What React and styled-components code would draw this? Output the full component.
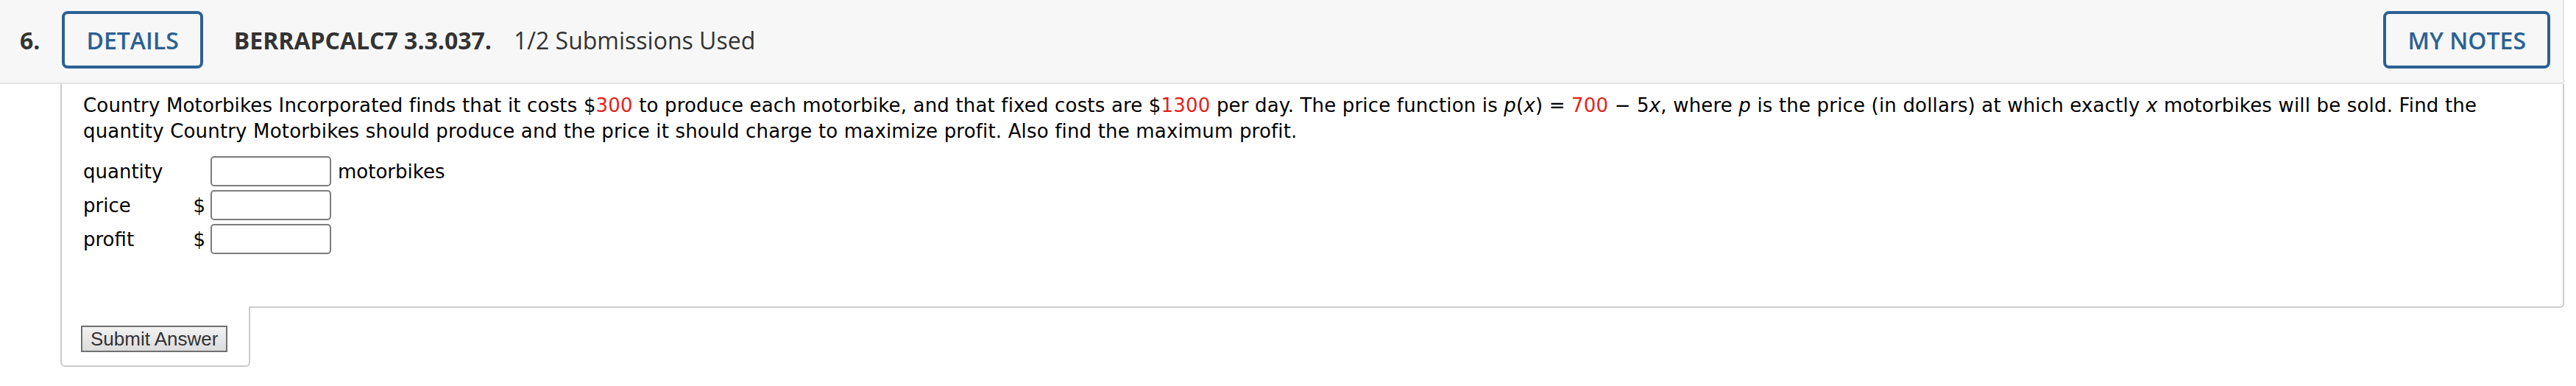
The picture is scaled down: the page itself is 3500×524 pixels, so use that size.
import React from "react";
import styled, { createGlobalStyle } from "styled-components";

const GlobalStyle = createGlobalStyle`
  body {
    margin: 0;
    background: #ffffff;
  }
`;

// question header > number, details, title, notes
const Header = styled.div`
  display: flex;
  align-items: center;
  box-sizing: border-box;
  height: 114px;
  padding: 0 17px 4px 27px;
  background: #f7f7f7;
  border-right: 2px solid #e4e4e4;
  border-bottom: 2px solid #e4e4e4;
  border-bottom-right-radius: 4px;
  font-family: "Open Sans", sans-serif;
  font-size: 32px;
  color: #333333;
`;
const Number = styled.span`
  font-weight: 700;
`;
const OutlineButton = styled.button`
  height: 78px;
  margin-left: ${({ right }) => (right ? "auto" : "30px")};
  padding: 0 29px;
  background: transparent;
  border: 4px solid #2b6194;
  border-radius: 8px;
  color: #2b6194;
  font-family: "Open Sans", sans-serif;
  font-size: 32px;
  font-weight: 600;
`;
const Title = styled.span`
  margin-left: 42px;
  font-weight: 700;
`;
const Used = styled.span`
  margin-left: 30px;
`;

const Page = styled.div`
  width: 3484px;
`;
const Card = styled.div`
  margin-left: 82px;
  padding: 12px 29px 71px 29px;
  border: 2px solid #cccccc;
  border-top: none;
  border-bottom-right-radius: 6px;
  font-family: "DejaVu Sans", Verdana, sans-serif;
  font-size: 26px;
  color: #000000;
`;
const Question = styled.p`
  margin: 0;
  line-height: 35px;
  letter-spacing: 0.17px;
`;
const Red = styled.span`
  color: #e2231a;
`;
const AnswerGrid = styled.div`
  display: grid;
  grid-template-columns: 145px 28px 164px auto;
  row-gap: 5px;
  align-items: center;
  margin-top: 16px;
`;
const Label = styled.span``;
const Dollar = styled.span`
  text-align: right;
  padding-right: 7px;
`;
const Field = styled.input`
  box-sizing: border-box;
  width: 164px;
  height: 41px;
  border: 2px solid #7c7c7c;
  border-radius: 5px;
  background: #ffffff;
`;
const Unit = styled.span`
  margin-left: 9px;
`;
const SubmitTab = styled.div`
  box-sizing: border-box;
  width: 258px;
  margin: -2px 0 0 82px;
  padding: 26px 0 18px 26px;
  background: #ffffff;
  border: 2px solid #cccccc;
  border-top: none;
  border-radius: 0 0 6px 6px;
`;
const SubmitButton = styled.button`
  height: 36px;
  padding: 0 11px;
  border: 2px solid #707070;
  background: linear-gradient(#f2f2f2, #dcdcdc);
  color: #333333;
  font-family: "Liberation Sans", Arial, sans-serif;
  font-size: 26px;
  line-height: 30px;
`;

const rows = [
  { label: "quantity", dollar: false, unit: "motorbikes" },
  { label: "price", dollar: true },
  { label: "profit", dollar: true },
];

const App = () => {
  return (
    <Page>
      <GlobalStyle />
      <Header>
        <Number>6.</Number>
        <OutlineButton>DETAILS</OutlineButton>
        <Title>BERRAPCALC7 3.3.037.</Title>
        <Used>1/2 Submissions Used</Used>
        <OutlineButton right>MY NOTES</OutlineButton>
      </Header>
      <Card>
        <Question>
          Country Motorbikes Incorporated finds that it costs $<Red>300</Red> to
          produce each motorbike, and that fixed costs are $<Red>1300</Red> per
          day. The price function is <i>p</i>(<i>x</i>) = <Red>700</Red> − 5
          <i>x</i>, where <i>p</i> is the price (in dollars) at which exactly{" "}
          <i>x</i> motorbikes will be sold. Find the quantity Country Motorbikes
          should produce and the price it should charge to maximize profit. Also
          find the maximum profit.
        </Question>
        <AnswerGrid>
          {rows.map((row) => (
            <React.Fragment key={row.label}>
              <Label>{row.label}</Label>
              <Dollar>{row.dollar ? "$" : ""}</Dollar>
              <Field type="text" />
              <Unit>{row.unit || ""}</Unit>
            </React.Fragment>
          ))}
        </AnswerGrid>
      </Card>
      <SubmitTab>
        <SubmitButton>Submit Answer</SubmitButton>
      </SubmitTab>
    </Page>
  );
};

export default App;
